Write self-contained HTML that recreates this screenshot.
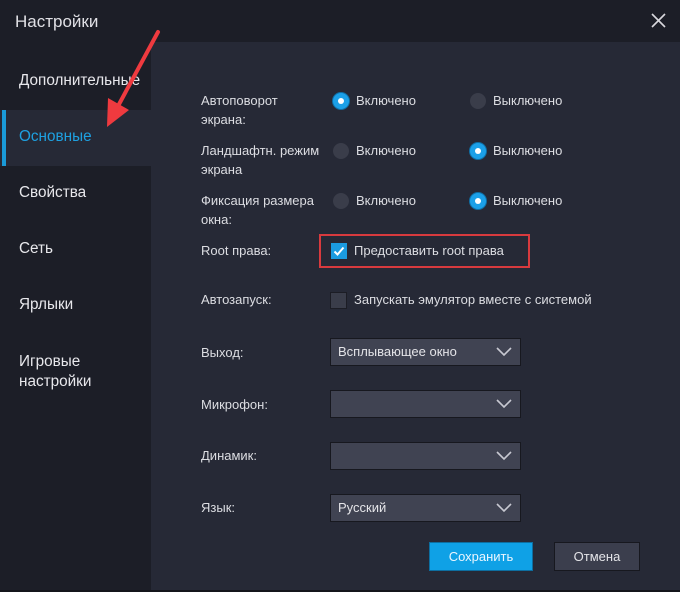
<!DOCTYPE html>
<html><head><meta charset="utf-8"><style>
*{margin:0;padding:0;box-sizing:border-box}
body{width:680px;height:592px;background:#1c1e27;font-family:"Liberation Sans",sans-serif;color:#e6e6ea;position:relative;overflow:hidden}
.a{position:absolute}
.t{font-size:13px;color:#dcdde2;line-height:19px}
.side{font-size:15px;color:#e8e8ec}
.rad{width:16px;height:16px;border-radius:50%;background:#3a3d4a}
.on{background:#1ba0e8;box-shadow:0 0 0 1px #0f6fa6}
.on:after{content:"";position:absolute;left:5px;top:5px;width:6px;height:6px;border-radius:50%;background:#fff}
.dd{width:191px;height:28px;background:#404352;border:1px solid #17181f;font-size:13px;color:#e4e4e8;padding-left:7px;line-height:26px}
.dd svg{position:absolute;right:8px;top:8px}
</style></head><body>
<div class="a" style="left:15px;top:12px;font-size:17px;color:#e0e0e5">Настройки</div>
<svg class="a" style="left:651px;top:13px" width="15" height="15"><path d="M1 1L14 14M14 1L1 14" stroke="#d8d8dd" stroke-width="1.6"/></svg>
<div class="a" style="left:151px;top:42px;width:529px;height:548px;background:#262936"></div>
<div class="a" style="left:0;top:590px;width:680px;height:2px;background:#14151b"></div>
<div class="a" style="left:0;top:110px;width:151px;height:56px;background:#262936"></div>
<div class="a" style="left:2px;top:110px;width:4px;height:56px;background:#1a9ad8"></div>
<div class="a side" style="left:19px;top:72px;font-size:15.3px">Дополнительные</div>
<div class="a side" style="left:19px;top:128px;color:#1ea0e0;font-size:15.3px">Основные</div>
<div class="a side" style="left:19px;top:184px;font-size:15.3px">Свойства</div>
<div class="a side" style="left:19px;top:240px;font-size:15.3px">Сеть</div>
<div class="a side" style="left:19px;top:296px;font-size:15.3px">Ярлыки</div>
<div class="a side" style="left:19px;top:352px;line-height:20px;font-size:15.3px">Игровые<br>настройки</div>
<svg class="a" style="left:95px;top:28px" width="70" height="105"><path d="M63 4L22 80" stroke="#ef3a3f" stroke-width="4" stroke-linecap="round"/><path d="M12 99L13 70L34 82Z" fill="#ef3a3f"/></svg>

<div class="a t" style="left:201px;top:91px">Автоповорот<br>экрана:</div>
<div class="a t" style="left:201px;top:141px">Ландшафтн. режим<br>экрана</div>
<div class="a t" style="left:201px;top:191px">Фиксация размера<br>окна:</div>
<div class="a rad on" style="left:333px;top:93px"></div><div class="a t" style="left:356px;top:91px">Включено</div>
<div class="a rad" style="left:470px;top:93px"></div><div class="a t" style="left:493px;top:91px">Выключено</div>
<div class="a rad" style="left:333px;top:143px"></div><div class="a t" style="left:356px;top:141px">Включено</div>
<div class="a rad on" style="left:470px;top:143px"></div><div class="a t" style="left:493px;top:141px">Выключено</div>
<div class="a rad" style="left:333px;top:193px"></div><div class="a t" style="left:356px;top:191px">Включено</div>
<div class="a rad on" style="left:470px;top:193px"></div><div class="a t" style="left:493px;top:191px">Выключено</div>

<div class="a t" style="left:201px;top:241px">Root права:</div>
<div class="a" style="left:319px;top:234px;width:211px;height:34px;border:2px solid #d83a3e"></div>
<div class="a" style="left:331px;top:243px;width:16px;height:16px;background:#1b9be0"></div>
<svg class="a" style="left:331px;top:243px" width="16" height="16"><path d="M3.5 8.5L6.5 11.5L12.5 4.5" stroke="#fff" stroke-width="2" fill="none"/></svg>
<div class="a t" style="left:354px;top:241px">Предоставить root права</div>

<div class="a t" style="left:201px;top:290px">Автозапуск:</div>
<div class="a" style="left:330px;top:292px;width:17px;height:17px;background:#3a3d4a;border:1px solid #1c1d25"></div>
<div class="a t" style="left:354px;top:290px">Запускать эмулятор вместе с системой</div>

<div class="a t" style="left:201px;top:343px">Выход:</div>
<div class="a t" style="left:201px;top:395px">Микрофон:</div>
<div class="a t" style="left:201px;top:446px">Динамик:</div>
<div class="a t" style="left:201px;top:498px">Язык:</div>
<div class="a dd" style="left:330px;top:338px">Всплывающее окно<svg width="16" height="10"><path d="M1 1L8 8L15 1" stroke="#c8c9d2" stroke-width="1.6" fill="none"/></svg></div>
<div class="a dd" style="left:330px;top:390px"><svg width="16" height="10"><path d="M1 1L8 8L15 1" stroke="#c8c9d2" stroke-width="1.6" fill="none"/></svg></div>
<div class="a dd" style="left:330px;top:442px"><svg width="16" height="10"><path d="M1 1L8 8L15 1" stroke="#c8c9d2" stroke-width="1.6" fill="none"/></svg></div>
<div class="a dd" style="left:330px;top:494px">Русский<svg width="16" height="10"><path d="M1 1L8 8L15 1" stroke="#c8c9d2" stroke-width="1.6" fill="none"/></svg></div>

<div class="a" style="left:429px;top:542px;width:104px;height:29px;background:#0fa1e6;border:1px solid #0d6ea0;color:#eaf6ff;font-size:13px;text-align:center;line-height:27px">Сохранить</div>
<div class="a" style="left:554px;top:542px;width:86px;height:29px;background:#3b3e4d;border:1px solid #17181f;color:#e4e4e8;font-size:13px;text-align:center;line-height:27px">Отмена</div>
</body></html>
